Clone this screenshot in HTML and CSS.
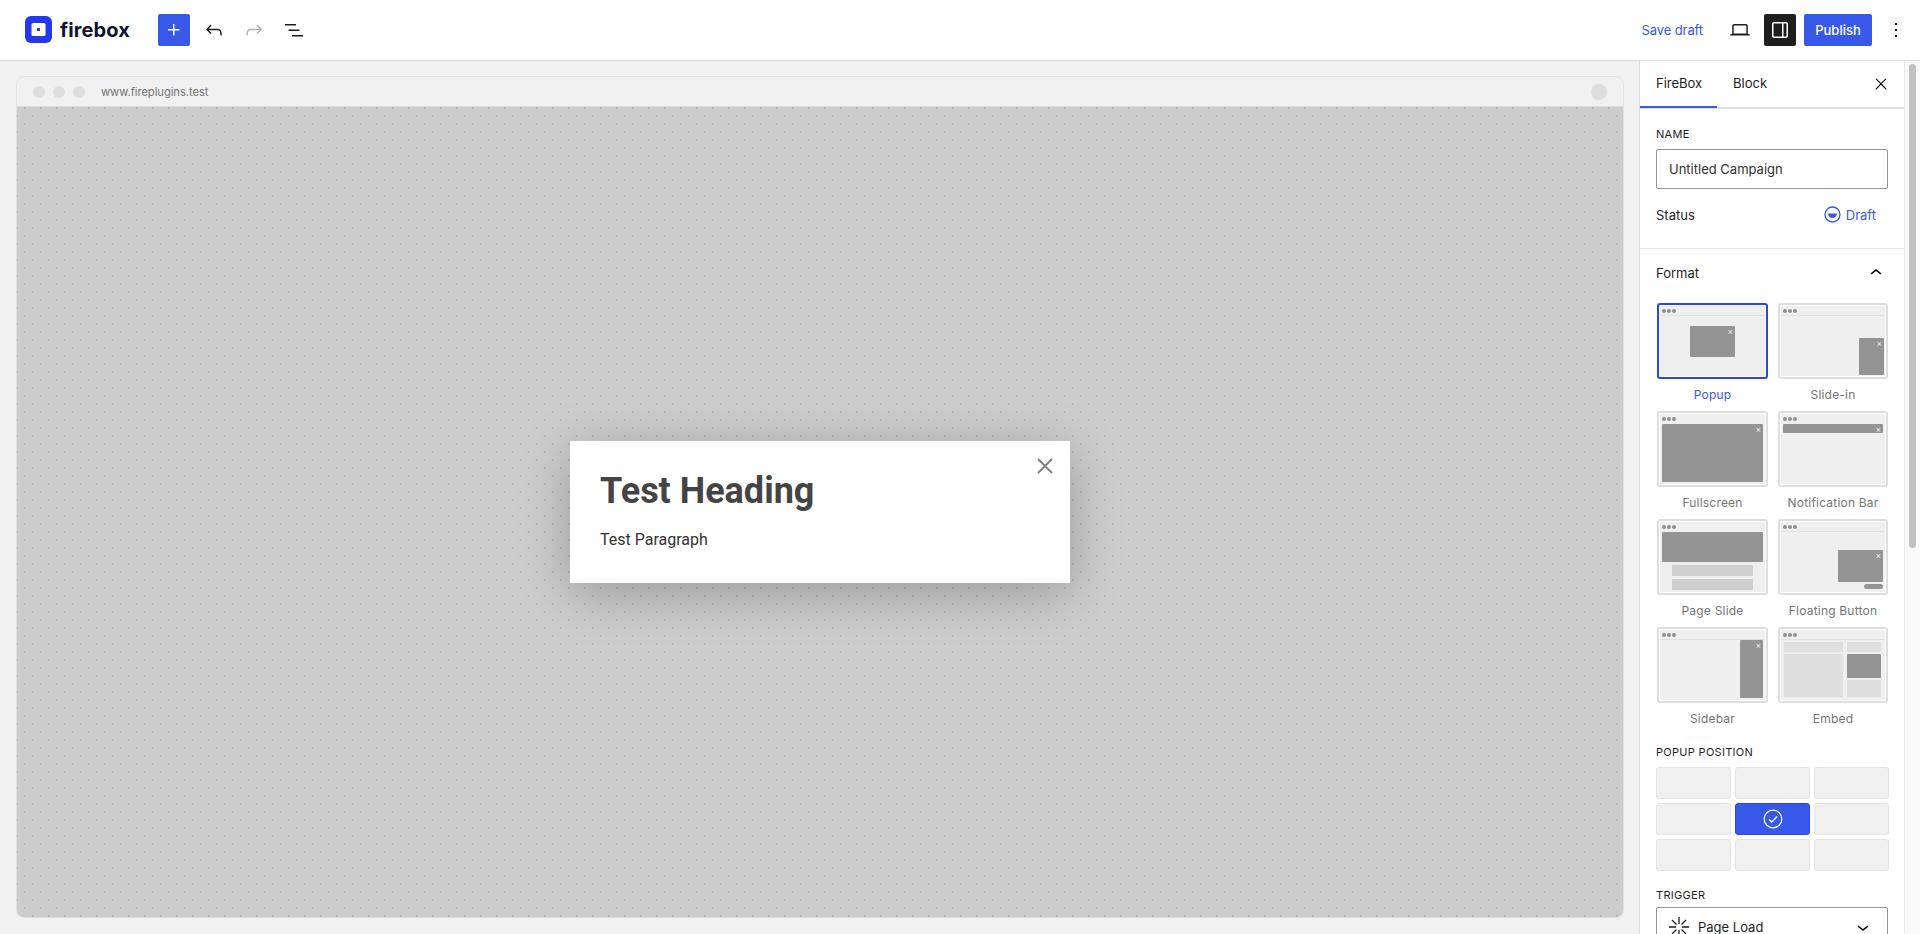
FILE: index.html
```html
<!DOCTYPE html>
<html lang="en">
<head>
    <meta charset="UTF-8">
    <meta name="viewport" content="width=device-width, initial-scale=1.0">
    <title>FireBox Campaign Editor</title>
    <link rel="stylesheet" href="styles.css">
</head>
<body>
    <header class="topbar">
        <div class="brand">
            <svg class="brand-logo" width="27" height="27" viewBox="0 0 27 27"><rect width="27" height="27" rx="6" fill="#2338ef"/><rect x="6.500" y="7" width="14" height="13" rx="1.500" fill="#fff"/><rect x="12" y="12" width="3" height="3" rx=".5" fill="#2338ef"/></svg>
            <span class="brand-name">firebox</span>
        </div>
        <button class="icon-btn btn-add"><svg width="24" height="24" viewBox="0 0 24 24"><path d="M11 12.500V17.500H12.500V12.500H17.500V11H12.500V6H11V11H6V12.500H11Z"/></svg></button>
        <button class="icon-btn"><svg width="24" height="24" viewBox="0 0 24 24"><path d="M18.300 11.700c-.6-.6-1.400-.9-2.300-.9H6.700l2.900-3.300-1.100-1-4.500 5L8.500 16l1-1-2.700-2.700H16c.5 0 .9.2 1.300.5 1 1 1 3.400 1 4.500v.3h1.500v-.2c0-1.500 0-4.300-1.500-5.700z"/></svg></button>
        <button class="icon-btn is-disabled"><svg width="24" height="24" viewBox="0 0 24 24"><path d="M15.600 6.500l-1.100 1 2.900 3.300H8c-.9 0-1.700.3-2.300.9-1.400 1.500-1.400 4.200-1.400 5.600v.2h1.500v-.3c0-1.100 0-3.500 1-4.500.3-.3.7-.5 1.300-.5h9.200L14.500 15l1.100 1.100 4.600-4.600-4.600-5z"/></svg></button>
        <button class="icon-btn"><svg width="24" height="24" viewBox="0 0 24 24"><path d="M3 6h11v1.500H3V6Zm3.500 5.500h11V13h-11v-1.500ZM21 17H10v1.500h11V17Z"/></svg></button>
        <div class="topbar-right">
            <a class="save-draft">Save draft</a>
            <button class="icon-btn"><svg width="24" height="24" viewBox="0 0 24 24"><path d="M20.500 16h-.7V8c0-1.100-.9-2-2-2H6.200c-1.100 0-2 .9-2 2v8h-.7c-.8 0-1.500.7-1.500 1.500h20c0-.8-.7-1.500-1.500-1.500zM5.700 8c0-.3.2-.5.5-.5h11.600c.3 0 .5.2.5.5v7.600H5.700V8z"/></svg></button>
            <button class="icon-btn btn-dark"><svg width="24" height="24" viewBox="0 0 24 24"><path d="M18 4H6c-1.100 0-2 .9-2 2v12c0 1.100.9 2 2 2h12c1.100 0 2-.9 2-2V6c0-1.100-.9-2-2-2zm-4 14.500H6c-.3 0-.5-.2-.5-.5V6c0-.3.2-.5.5-.5h8v13zm4.500-.5c0 .3-.2.500-.5.500h-2.500v-13H18c.3 0 .5.2.5.5v12z"/></svg></button>
            <button class="btn-publish">Publish</button>
            <button class="icon-btn btn-more"><svg width="24" height="24" viewBox="0 0 24 24"><path d="M13 19h-2v-2h2v2zm0-6h-2v-2h2v2zm0-6h-2V5h2v2z"/></svg></button>
        </div>
    </header>

    <div class="workspace">
        <main class="canvas">
            <div class="browser">
                <div class="browser-bar">
                    <span class="dot"></span><span class="dot"></span><span class="dot"></span>
                    <span class="browser-url">www.fireplugins.test</span>
                    <span class="dot dot-big"></span>
                </div>
                <div class="stage">
                    <div class="popup">
                        <svg class="popup-close" width="18" height="18" viewBox="0 0 18 18"><path d="M2 2l14 14M16 2L2 16" stroke="#808080" stroke-width="2" fill="none"/></svg>
                        <h1>Test Heading</h1>
                        <p>Test Paragraph</p>
                    </div>
                </div>
            </div>
        </main>

        <aside class="sidebar">
            <div class="tabs">
                <span class="tab is-active">FireBox</span>
                <span class="tab">Block</span>
                <svg class="tabs-close" width="18" height="18" viewBox="0 0 24 24"><path d="M13 11.800l6.100-6.300-1-1-6.100 6.200-6.100-6.200-1 1 6.100 6.300-6.500 6.700 1 1 6.500-6.600 6.500 6.600 1-1z"/></svg>
            </div>
            <section class="panel panel-name">
                <div class="field-label">Name</div>
                <div class="text-input">Untitled Campaign</div>
                <div class="status-row">
                    <span>Status</span>
                    <span class="status-value">
                        <svg width="17" height="17" viewBox="0 0 17 17"><circle cx="8.500" cy="8.500" r="7.500" fill="none" stroke="#3858e9" stroke-width="1.300"/><path d="M4 7.500h9a4.500 4.500 0 0 1-9 0z" fill="#3858e9"/></svg>
                        Draft
                    </span>
                </div>
            </section>
            <section class="panel panel-format">
                <div class="panel-head">
                    <span>Format</span>
                    <svg width="24" height="24" viewBox="0 0 24 24"><path d="M6.500 12.400L12 8l5.500 4.400-.9 1.200L12 10l-4.500 3.600-1-1.200z"/></svg>
                </div>
                <div class="formats">
                    <div class="format is-selected">
                        <div class="thumb"><div class="thumb-bar"><i></i><i></i><i></i></div><div class="thumb-body t-popup"><div class="piece"><b>×</b></div></div></div>
                        <div class="format-name">Popup</div>
                    </div>
                    <div class="format">
                        <div class="thumb"><div class="thumb-bar"><i></i><i></i><i></i></div><div class="thumb-body t-slide"><div class="piece"><b>×</b></div></div></div>
                        <div class="format-name">Slide-in</div>
                    </div>
                    <div class="format">
                        <div class="thumb"><div class="thumb-bar no-line"><i></i><i></i><i></i></div><div class="thumb-body t-full"><div class="piece"><b>×</b></div></div></div>
                        <div class="format-name">Fullscreen</div>
                    </div>
                    <div class="format">
                        <div class="thumb"><div class="thumb-bar no-line"><i></i><i></i><i></i></div><div class="thumb-body t-notif"><div class="piece"><b>×</b></div></div></div>
                        <div class="format-name">Notification Bar</div>
                    </div>
                    <div class="format">
                        <div class="thumb"><div class="thumb-bar no-line"><i></i><i></i><i></i></div><div class="thumb-body t-page"><div class="piece"></div><div class="ghost"></div><div class="ghost"></div></div></div>
                        <div class="format-name">Page Slide</div>
                    </div>
                    <div class="format">
                        <div class="thumb"><div class="thumb-bar"><i></i><i></i><i></i></div><div class="thumb-body t-float"><div class="piece"><b>×</b></div><div class="float-btn"></div></div></div>
                        <div class="format-name">Floating Button</div>
                    </div>
                    <div class="format">
                        <div class="thumb"><div class="thumb-bar"><i></i><i></i><i></i></div><div class="thumb-body t-side"><div class="piece"><b>×</b></div></div></div>
                        <div class="format-name">Sidebar</div>
                    </div>
                    <div class="format">
                        <div class="thumb"><div class="thumb-bar"><i></i><i></i><i></i></div><div class="thumb-body t-embed">
                            <div class="embed-col embed-left"><div class="ghost-s"></div><div class="ghost-l"></div></div>
                            <div class="embed-col embed-right"><div class="ghost-s"></div><div class="piece"></div><div class="ghost-m"></div></div>
                        </div></div>
                        <div class="format-name">Embed</div>
                    </div>
                </div>
                <div class="field-label label-position">Popup Position</div>
                <div class="positions">
                    <div class="pos"></div><div class="pos"></div><div class="pos"></div>
                    <div class="pos"></div>
                    <div class="pos is-active"><svg width="20" height="20" viewBox="0 0 20 20"><circle cx="10" cy="10" r="8.800" fill="none" stroke="#fff" stroke-width="1.200"/><path d="M6 10.500l2.800 2.600L14 7.500" fill="none" stroke="#fff" stroke-width="1.300"/></svg></div>
                    <div class="pos"></div>
                    <div class="pos"></div><div class="pos"></div><div class="pos"></div>
                </div>
                <div class="field-label label-trigger">Trigger</div>
                <div class="select">
                    <svg width="20" height="20" viewBox="0 0 20 20"><path d="M10 0v7M10 13v7M0 10h7M13 10h7M3 3l4.500 4.500M12.500 12.500L17 17M17 3l-4.500 4.500M7.500 12.500L3 17" stroke="#1e1e1e" stroke-width="1.300" fill="none"/></svg>
                    <span>Page Load</span>
                    <svg class="select-arrow" width="24" height="24" viewBox="0 0 24 24"><path d="M17.500 11.600L12 16l-5.500-4.400.9-1.200L12 14l4.500-3.600 1 1.200z"/></svg>
                </div>
            </section>
        </aside>

        <div class="scrollbar"><div class="scrollbar-thumb"></div></div>
    </div>
</body>
</html>
```

FILE: styles.css
```css
* {
    box-sizing: border-box;
}
html, body {
    margin: 0;
    height: 934px;
    overflow: hidden;
}
body {
    font-family: Inter, "Liberation Sans", sans-serif;
    font-size: 13px;
    color: #1e1e1e;
    background-color: #f0f0f0;
    display: flex;
    flex-direction: column;
}
button {
    border: none;
    padding: 0;
    background: none;
    font-family: inherit;
}

/* top bar */
.topbar {
    height: 61px;
    flex: none;
    display: flex;
    align-items: center;
    padding: 0 8px 1px 25px;
    background: #fff;
    border-bottom: 1px solid #dcdcdc;
}
.brand {
    display: flex;
    align-items: center;
    gap: 8px;
    width: 133px;
}
.brand-name {
    font-size: 20px;
    font-weight: 700;
    color: #10132f;
    letter-spacing: 0.1px;
}
.icon-btn {
    width: 32px;
    height: 32px;
    margin-right: 8px;
    display: flex;
    align-items: center;
    justify-content: center;
    border-radius: 2px;
    fill: #1e1e1e;
}
.is-disabled {
    fill: #b4b4b4;
}
.btn-add {
    background: #3858e9;
    fill: #fff;
}
.topbar-right {
    margin-left: auto;
    display: flex;
    align-items: center;
}
.save-draft {
    color: #3858e9;
    margin-right: 21px;
    letter-spacing: -0.1px;
}
.btn-dark {
    background: #1e1e1e;
    fill: #fff;
}
.btn-publish {
    width: 68px;
    height: 32px;
    background: #3858e9;
    color: #fff;
    font-size: 13px;
    font-weight: 500;
    border-radius: 2px;
    margin-right: 8px;
}
.btn-more {
    margin-right: 0;
}

/* main area */
.workspace {
    flex: 1;
    min-height: 0;
    display: flex;
}
.canvas {
    flex: 1;
    padding: 15px 15px 16px 16px;
}
.browser {
    height: 100%;
    display: flex;
    flex-direction: column;
    border: 1px solid #e0e0e0;
    border-radius: 8px;
    overflow: hidden;
}
.browser-bar {
    height: 30px;
    flex: none;
    display: flex;
    align-items: center;
    gap: 8px;
    padding: 0 16px;
    background: #f0f0f0;
    border-bottom: 1px solid #e0e0e0;
}
.dot {
    width: 12px;
    height: 12px;
    border-radius: 50%;
    background: #dedede;
}
.dot-big {
    width: 16px;
    height: 16px;
    margin-left: auto;
}
.browser-url {
    font-size: 11.200px;
    letter-spacing: -0.05px;
    color: #757575;
    margin-left: 8px;
}
.stage {
    flex: 1;
    display: flex;
    align-items: center;
    justify-content: center;
    background-color: #cdcdcd;
    background-image: radial-gradient(circle, #b6b6b6 0.8px, transparent 1.200px), radial-gradient(circle, #b6b6b6 0.8px, transparent 1.200px);
    background-size: 16px 16px;
    background-position: 0 -7px, 8px 1px;
}
.popup {
    position: relative;
    width: 500px;
    height: 142px;
    padding: 32px 30px 30px;
    background: #fff;
    box-shadow: 0 10px 50px rgba(0, 0, 0, 0.25);
    font-family: Roboto, sans-serif;
    color: #444;
}
.popup h1 {
    margin: 0;
    font-size: 36px;
    line-height: 36px;
    font-weight: 700;
}
.popup p {
    margin: 19px 0 0;
    font-size: 16px;
    line-height: 24px;
    color: #333;
}
.popup-close {
    position: absolute;
    top: 16px;
    right: 16px;
}

/* sidebar */
.sidebar {
    width: 266px;
    flex: none;
    background: #fff;
    border-left: 1px solid #dcdcdc;
    border-right: 1px solid #e8e8e8;
    overflow: hidden;
}
.tabs {
    height: 48px;
    display: flex;
    align-items: center;
    border-bottom: 2px solid #e0e0e0;
}
.tab {
    height: 48px;
    line-height: 46px;
    padding: 0 16px;
}
.tab.is-active {
    width: 77px;
    border-bottom: 2px solid #3858e9;
}
.tabs-close {
    margin-left: auto;
    margin-right: 14px;
}
.panel {
    padding: 0 16px;
    border-bottom: 1px solid #e8e8e8;
}
.panel-name {
    height: 140px;
    padding-top: 17px;
}
.field-label {
    font-size: 11px;
    font-weight: 400;
    line-height: 16px;
    letter-spacing: 0.3px;
    text-transform: uppercase;
}
.text-input {
    height: 40px;
    margin-top: 7px;
    padding: 0 12px;
    line-height: 38px;
    color: #2f2f2f;
    border: 1px solid #949494;
    border-radius: 2px;
}
.status-row {
    margin-top: 17px;
    display: flex;
    justify-content: space-between;
    align-items: center;
    padding-right: 12px;
}
.status-value {
    display: flex;
    align-items: center;
    gap: 5px;
    color: #3858e9;
}
.panel-format {
    border-bottom: none;
    padding-top: 14px;
}
.panel-head {
    display: flex;
    justify-content: space-between;
    align-items: center;
    height: 20px;
    font-size: 13px;
    font-weight: 400;
}
.formats {
    margin-top: 20px;
    display: grid;
    grid-template-columns: 111px 110px;
    column-gap: 10px;
    row-gap: 0;
    padding-left: 1px;
}
.format {
    height: 108px;
}
.thumb {
    height: 76px;
    display: flex;
    flex-direction: column;
    padding: 1px;
    background: #fff;
    border: 2px solid #dedede;
    border-radius: 3px;
}
.is-selected .thumb {
    border-color: #2b46e8;
}
.thumb-bar {
    height: 10px;
    flex: none;
    display: flex;
    align-items: center;
    gap: 1px;
    padding-left: 2px;
    background: #efefef;
    border-bottom: 1px solid #e0e0e0;
}
.thumb-bar.no-line {
    border-bottom-color: #efefef;
}
.thumb-bar i {
    width: 4px;
    height: 4px;
    border-radius: 50%;
    background: #8f8f8f;
}
.thumb-body {
    flex: 1;
    display: flex;
    background: #efefef;
}
.piece {
    background: #949494;
    border-radius: 1px;
    display: flex;
    justify-content: flex-end;
}
.piece b {
    font-family: "Liberation Sans", sans-serif;
    font-size: 9px;
    line-height: 9px;
    height: 9px;
    padding: 2px 2px 0 0;
    font-weight: 400;
    color: #eee;
}
.format-name {
    margin-top: 8px;
    text-align: center;
    font-size: 12px;
    line-height: 16px;
    letter-spacing: 0.2px;
    color: #757575;
}
.is-selected .format-name {
    color: #3858e9;
}
.t-popup {
    align-items: flex-start;
    justify-content: center;
    padding-top: 10px;
}
.t-popup .piece {
    width: 45px;
    height: 31px;
}
.t-slide {
    align-items: flex-end;
    justify-content: flex-end;
    padding: 1px;
}
.t-slide .piece {
    width: 25px;
    height: 37px;
}
.t-full {
    padding: 0 2px 2px;
}
.t-full .piece {
    flex: 1;
}
.t-notif {
    align-items: flex-start;
    padding: 0 2px;
}
.t-notif .piece {
    flex: 1;
    height: 9px;
}
.t-page {
    flex-direction: column;
    align-items: center;
    padding: 0 2px;
}
.t-page .piece {
    width: 100%;
    height: 30px;
}
.ghost {
    width: 81px;
    height: 11px;
    margin-top: 3px;
    background: #cfcfcf;
    border-radius: 1px;
}
.t-float {
    flex-direction: column;
    align-items: flex-end;
    justify-content: flex-end;
    padding: 0 2px 3px;
}
.t-float .piece {
    width: 45px;
    height: 32px;
}
.float-btn {
    width: 19px;
    height: 5px;
    margin-top: 2px;
    background: #949494;
    border-radius: 3px;
}
.t-side {
    justify-content: flex-end;
    padding: 0 2px 2px;
}
.t-side .piece {
    width: 23px;
}
.t-embed {
    gap: 4px;
    padding: 2px 3px 3px;
}
.embed-col {
    display: flex;
    flex-direction: column;
    gap: 2px;
}
.embed-left {
    width: 59px;
}
.embed-right {
    width: 34px;
}
.ghost-s {
    height: 10px;
    background: #dfdfdf;
}
.ghost-l {
    flex: 1;
    background: #dfdfdf;
}
.ghost-m {
    flex: 1;
    background: #dfdfdf;
}
.embed-right .piece {
    height: 24px;
}
.label-position {
    margin-top: 9px;
}
.positions {
    margin-top: 7px;
    display: grid;
    grid-template-columns: repeat(3, 75px);
    grid-auto-rows: 32px;
    gap: 4px;
}
.pos {
    background: #f0f0f0;
    border: 1px solid #e4e4e4;
    border-radius: 3px;
    display: flex;
    align-items: center;
    justify-content: center;
}
.pos.is-active {
    background: #3858e9;
    border-color: #2b46e8;
}
.label-trigger {
    margin-top: 16px;
}
.select {
    height: 40px;
    margin-top: 4px;
    padding: 0 12px;
    display: flex;
    align-items: center;
    gap: 9px;
    border: 1px solid #949494;
    border-radius: 2px;
}
.select-arrow {
    margin-left: auto;
}
.scrollbar {
    width: 15px;
    flex: none;
    padding: 3px 4px 0;
    background: #f9f9f9;
}
.scrollbar-thumb {
    height: 484px;
    background: #c1c1c1;
    border-radius: 4px;
}
```
